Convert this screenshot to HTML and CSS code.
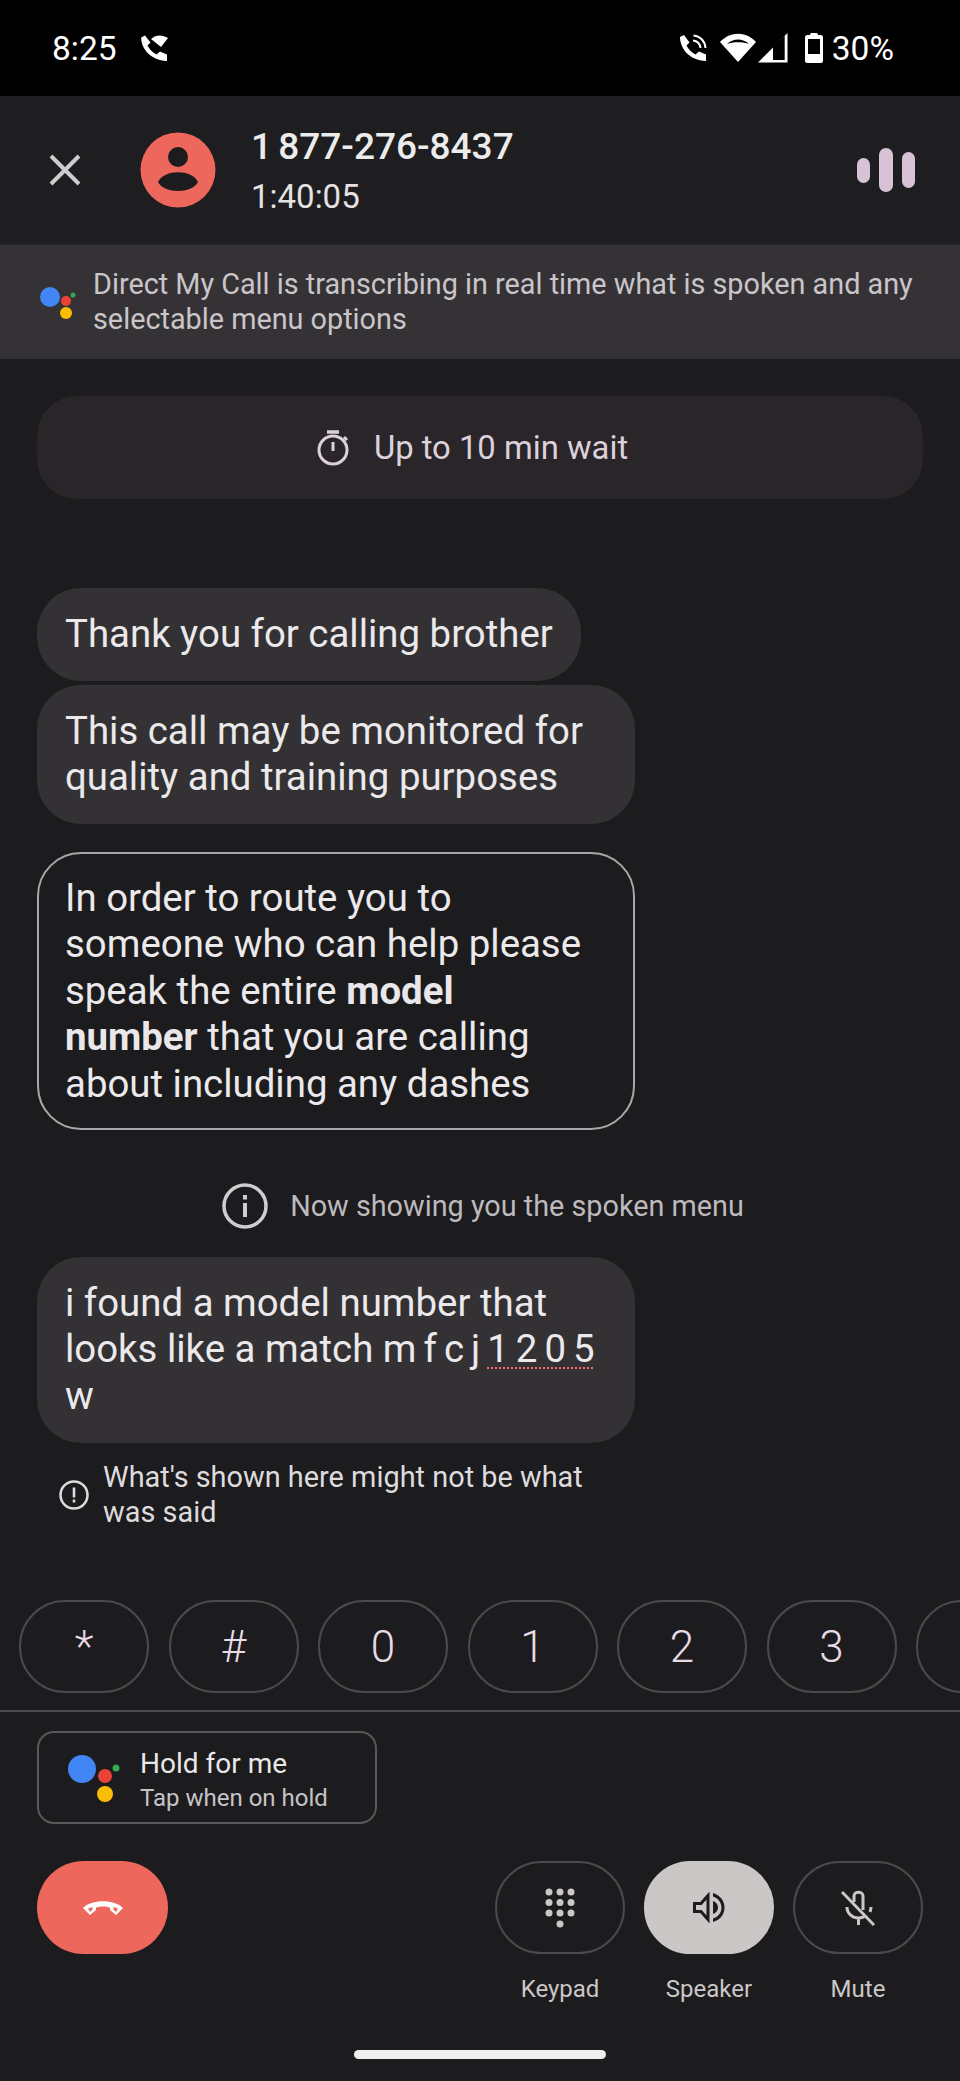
FILE: index.html
```html
<!DOCTYPE html>
<html lang="en">
<head>
<meta charset="utf-8">
<title>Call</title>
<link rel="stylesheet" href="styles.css">
</head>
<body>
<div class="phone">
  <div class="status">
    <div class="status-left">
      <span class="clock">8:25</span>
      <svg class="st-call" viewBox="0 0 28 28"><path fill="#fff" d="M5 1.500 L1.200 3.600 C1 14 10 26.500 27 27 V20.500 L20 17.500 L16.500 20.500 C12.500 18.500 9.500 15.500 7.500 11.500 L10.500 8.500 Z"/><path fill="#fff" d="M11 5 C16 .5 22 .5 28 4 L21 13 Z"/></svg>
    </div>
    <div class="status-right">
      <svg class="st-phone" viewBox="0 0 28 28"><path fill="#fff" d="M5 1 L1 3 C1 14 10 26.500 27 27 V20.500 L20 17.500 L16.500 20.500 C12.500 18.500 9.500 15.500 7.500 11.500 L10.500 8.500 Z"/><path fill="none" stroke="#fff" stroke-width="2" d="M14 6.500 C18 7 21 10 21.500 14 M14.500 1.500 C21 2 26 7 26.500 14"/></svg>
      <svg class="st-wifi" viewBox="0 0 36 30"><path fill="#fff" d="M0 9 C10 -2 26 -2 36 9 L18 29 Z"/><path fill="#000" d="M7 11 C13 5 23 5 29 11 C23 8.500 13 8.500 7 11 Z"/></svg>
      <svg class="st-signal" viewBox="0 0 30 30"><path fill="#fff" d="M0 29.500 L29.500 0 V29.500 Z"/><path fill="#000" d="M15 13.500 L26.700 2.700 V27 H15 Z"/></svg>
      <svg class="st-batt" viewBox="0 0 18 30"><path fill="#fff" fill-rule="evenodd" d="M5 2 C5 1 5.500 0 6.500 0 H11.500 C12.500 0 13 1 13 2 H16 C17 2 18 3 18 4 V28 C18 29 17 30 16 30 H2 C1 30 0 29 0 28 V4 C0 3 1 2 2 2 Z M3 6 V21 H15 V6 Z"/></svg>
      <span class="pct">30%</span>
    </div>
  </div>

  <header class="head">
    <svg class="close" viewBox="0 0 32 32"><path d="M2 2 L30 30 M30 2 L2 30" stroke="#cfcccf" stroke-width="4" fill="none"/></svg>
    <svg class="avatar" viewBox="0 0 76 76"><circle cx="38" cy="38" r="37.500" fill="#ee675c"/><circle cx="38" cy="25" r="10" fill="#1c1b1d"/><path d="M18 50 C24 37 52 37 58 50 C52 62 24 62 18 50 Z" fill="#1c1b1d"/></svg>
    <div class="who">
      <div class="num">1 877-276-8437</div>
      <div class="dur">1:40:05</div>
    </div>
    <div class="bars"><i class="b1"></i><i class="b2"></i><i class="b3"></i></div>
  </header>

  <div class="banner">
    <svg class="ga-small" viewBox="0 0 36 36"><circle cx="12" cy="13" r="10" fill="#4285f4"/><circle cx="28" cy="17" r="5" fill="#ea4335"/><circle cx="28" cy="29" r="6" fill="#fbbc04"/><circle cx="35" cy="11" r="2.500" fill="#34a853"/></svg>
    <p class="banner-text">Direct My Call is transcribing in real time what is spoken and any selectable menu options</p>
  </div>

  <main class="feed">
    <div class="chip">
      <svg class="timer" viewBox="0 0 34 36"><path d="M11 2 H23" stroke="#dcd0da" stroke-width="3.500"/><circle cx="17" cy="20" r="14" fill="none" stroke="#dcd0da" stroke-width="3"/><path d="M17 12 V21" stroke="#dcd0da" stroke-width="3"/><path d="M28 7 L31 10" stroke="#dcd0da" stroke-width="3"/></svg>
      <span>Up to 10 min wait</span>
    </div>
    <div class="bubble b-first">Thank you for calling brother</div>
    <div class="bubble b-second">This call may be monitored for quality and training purposes</div>
    <div class="bubble outlined">In order to route you to someone who can help please speak the entire <b>model number</b> that you are calling about including any dashes</div>
    <div class="info">
      <svg class="info-ic" viewBox="0 0 46 46"><circle cx="23" cy="23" r="21" fill="none" stroke="#d0cdd0" stroke-width="3.500"/><rect x="21" y="20" width="4" height="14" fill="#d0cdd0"/><rect x="21" y="12" width="4" height="4.500" fill="#d0cdd0"/></svg>
      <span>Now showing you the spoken menu</span>
    </div>
    <div class="bubble b-last">i found a model number that looks like a match <span class="spell">m f c j <span class="sp">1 2 0 5</span></span> w</div>
    <div class="warn">
      <svg class="warn-ic" viewBox="0 0 30 30"><circle cx="15" cy="15" r="13.500" fill="none" stroke="#dedbde" stroke-width="2.500"/><rect x="13.700" y="7.500" width="2.600" height="10" fill="#dedbde"/><rect x="13.700" y="19.500" width="2.600" height="3" fill="#dedbde"/></svg>
      <span>What's shown here might not be what was said</span>
    </div>
  </main>

  <div class="keys">
    <div class="key">*</div><div class="key">#</div><div class="key">0</div><div class="key">1</div><div class="key">2</div><div class="key">3</div><div class="key"></div>
  </div>

  <section class="bottom">
    <div class="hold">
      <svg class="ga-big" viewBox="0 0 54 48"><circle cx="15" cy="15" r="14" fill="#4285f4"/><circle cx="38" cy="22" r="7" fill="#ea4335"/><circle cx="38" cy="40" r="8" fill="#fbbc04"/><circle cx="49" cy="14" r="3.500" fill="#34a853"/></svg>
      <div class="hold-text">
        <div class="hold-t">Hold for me</div>
        <div class="hold-s">Tap when on hold</div>
      </div>
    </div>
    <div class="actions">
      <div class="hang"><svg viewBox="0 0 42 17"><path fill="#fff" d="M1 9 C9 0 33 0 41 9 L34 16 L28 11 V8.500 C24 7 18 7 14 8.500 V11 L8 16 Z"/><path fill="#ee675c" d="M6 9.500 L10.500 8 V10.500 L8 13 Z M36 9.500 L31.500 8 V10.500 L34 13 Z"/></svg></div>
      <div class="ctrl-group">
        <div class="ctrl">
          <div class="pill"><svg class="ic-key" viewBox="0 0 30 40"><g fill="#cbc7c7"><circle cx="4" cy="4" r="3.500"/><circle cx="15" cy="4" r="3.500"/><circle cx="26" cy="4" r="3.500"/><circle cx="4" cy="14.500" r="3.500"/><circle cx="15" cy="14.500" r="3.500"/><circle cx="26" cy="14.500" r="3.500"/><circle cx="4" cy="25" r="3.500"/><circle cx="15" cy="25" r="3.500"/><circle cx="26" cy="25" r="3.500"/><circle cx="15" cy="36" r="3.500"/></g></svg></div>
          <span>Keypad</span>
        </div>
        <div class="ctrl">
          <div class="pill on"><svg class="ic-spk" viewBox="0 0 32 32"><path fill="none" stroke="#1c1b1d" stroke-width="3" d="M1.500 11.500 H8 L15 3.500 V27.500 L8 19.500 H1.500 Z"/><path fill="#1c1b1d" d="M20 1 C27 3 31.500 9 31.500 15.500 C31.500 22.500 27 28 20 30 V26.500 C25 25 28.500 21 28.500 15.500 C28.500 10.500 25 6 20 4.500 Z M20 9 C23 10 25 12.500 25 15.500 C25 18.500 23 21 20 22 Z"/></svg></div>
          <span>Speaker</span>
        </div>
        <div class="ctrl">
          <div class="pill"><svg class="ic-mic" viewBox="0 0 34 36"><g fill="none" stroke="#cbc7c7"><path stroke-width="3" d="M1 2 L33 35"/><path stroke-width="3" d="M13 12 V6 C13 1 22 1 22 6 V20"/><path stroke-width="3" d="M6 17 C6 24 12 28 17.500 28 C20 28 22 27.500 24 26 M30 17 C30 19 29.500 20.500 29 22 M17.500 28 V35"/></g></svg></div>
          <span>Mute</span>
        </div>
      </div>
    </div>
    <div class="home"></div>
  </section>
</div>
</body>
</html>
```
FILE: styles.css
```css
* { box-sizing: border-box; }
html, body { margin: 0; padding: 0; background: #1c1b1d; }
body { font-family: Roboto, "Open Sans", sans-serif; }
.phone { width: 960px; height: 2081px; display: flex; flex-direction: column; overflow: hidden; background: #1c1b1d; color: #ebe9eb; }

.status { height: 96px; flex: none; background: #000; color: #fff; display: flex; justify-content: space-between; align-items: center; padding: 0 66px 0 52px; font-size: 33.500px; }
.status-left, .status-right { display: flex; align-items: center; }
.st-call { width: 28px; height: 28px; margin-left: 23px; }
.st-phone { width: 28px; height: 28px; }
.st-wifi { width: 36px; height: 30px; margin-left: 13px; }
.st-signal { width: 30px; height: 30px; margin-left: 2px; }
.st-batt { width: 18px; height: 30px; margin-left: 17px; }
.pct { margin-left: 9px; }

.head { height: 149px; flex: none; background: #1e1d1f; display: flex; align-items: center; padding-left: 49px; border-bottom: 1px solid #29282a; position: relative; }
.close { width: 32px; height: 32px; flex: none; }
.avatar { width: 76px; height: 76px; flex: none; margin-left: 59px; }
.who { margin-left: 35px; flex: 1; padding-top: 2px; }
.num { font-size: 37px; font-weight: 500; line-height: 44px; color: #ececec; word-spacing: -3px; }
.dur { font-size: 33px; line-height: 40px; margin-top: 8px; color: #e4e2e4; }
.bars { display: flex; align-items: center; gap: 9px; margin-right: 45px; }
.bars i { display: block; width: 13.500px; border-radius: 7px; background: #d8c2d5; }
.b1 { height: 25px; }
.b2 { height: 44px; }
.b3 { height: 36px; }

.banner { height: 114px; flex: none; background: #353236; display: flex; align-items: center; padding-left: 38px; padding-right: 30px; }
.ga-small { width: 36px; height: 36px; flex: none; overflow: visible; }
.banner-text { margin: 0 0 0 19px; font-size: 28.800px; line-height: 35px; color: #c9c5c9; }

.feed { flex: 1; min-height: 0; display: flex; flex-direction: column; align-items: flex-start; padding: 37px 37px 0; }
.chip { width: 886px; height: 103px; padding-right: 16px; background: #2a2529; border-radius: 40px; display: flex; align-items: center; justify-content: center; font-size: 32.800px; color: #dcd0da; gap: 24px; flex: none; }
.timer { width: 34px; height: 36px; }
.bubble { background: #333133; font-size: 38.400px; line-height: 46.500px; padding: 23px 28px; border-radius: 44px; color: #ebe9eb; width: 598px; flex: none; }
.b-first { width: auto; margin-top: 89px; }
.b-second { margin-top: 4px; }
.outlined { background: transparent; border: 2.500px solid #a9a7a9; margin-top: 28px; height: 278px; padding: 21px 46px 21px 26px; }
.outlined b { font-weight: 700; color: #e9e7e9; }
.info { display: flex; align-items: center; align-self: center; margin-top: 53px; margin-left: 6px; font-size: 28.800px; color: #bdb9bd; gap: 22px; }
.info-ic { width: 46px; height: 46px; flex: none; }
.b-last { margin-top: 28px; height: 186px; }
.spell { word-spacing: -2.500px; }
.sp { text-decoration: underline dotted #f06a6a 2px; text-underline-offset: 5px; }
.warn { display: flex; align-items: center; margin-top: 17px; margin-left: 22px; width: 560px; font-size: 28.900px; line-height: 35.500px; color: #dedbde; gap: 14px; }
.warn-ic { width: 30px; height: 30px; flex: none; }

.keys { flex: none; display: flex; gap: 19.500px; padding-left: 19px; height: 93px; margin-bottom: 17px; overflow: hidden; }
.key { flex: none; width: 130px; height: 93px; border: 2.500px solid #4b494c; border-radius: 46px; display: flex; align-items: center; justify-content: center; font-size: 44px; font-weight: 300; color: #e8dbe6; }

.bottom { flex: none; border-top: 2px solid #4b494c; height: 371px; padding: 19px 37px 0; position: relative; display: flex; flex-direction: column; }
.hold { width: 340px; height: 93px; border: 2.500px solid #5a585a; border-radius: 17px; display: flex; align-items: center; padding-left: 28px; gap: 19px; }
.hold-text { padding-top: 5px; }
.ga-big { width: 54px; height: 48px; flex: none; }
.hold-t { font-size: 28px; line-height: 36px; color: #e9e7e9; }
.hold-s { font-size: 24px; line-height: 33px; color: #c6c3c6; }
.actions { display: flex; justify-content: space-between; margin-top: 37px; }
.hang { width: 131px; height: 93px; border-radius: 47px; background: #ee675c; display: flex; align-items: center; justify-content: center; }
.hang svg { width: 42px; height: 17px; }
.ctrl-group { display: flex; gap: 19px; }
.ctrl { width: 130px; display: flex; flex-direction: column; align-items: center; font-size: 24px; color: #cbc7c7; }
.ctrl span { margin-top: 21px; line-height: 28px; }
.pill { width: 130px; height: 93px; border-radius: 47px; border: 2.500px solid #4b494c; display: flex; align-items: center; justify-content: center; }
.pill.on { background: #cbc7c7; border-color: #cbc7c7; }
.ic-key { width: 30px; height: 40px; }
.ic-spk { width: 32px; height: 32px; }
.ic-mic { width: 34px; height: 36px; }
.home { position: absolute; left: 354px; top: 338px; width: 252px; height: 9px; border-radius: 5px; background: #eeeeee; }
```
